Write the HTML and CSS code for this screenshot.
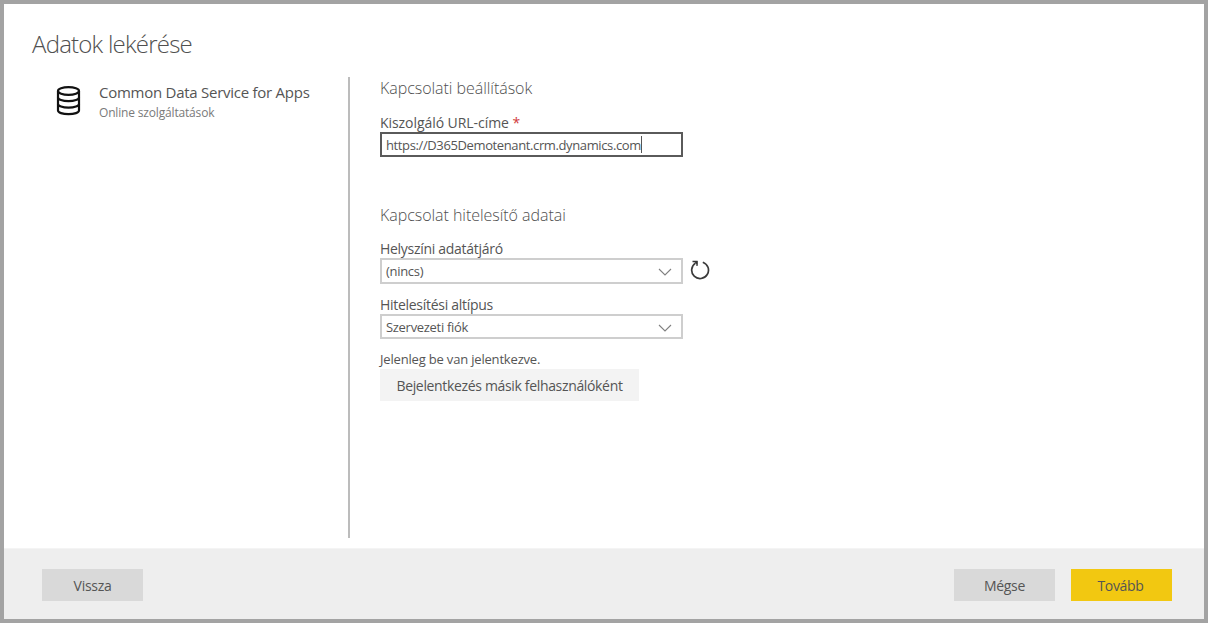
FILE: index.html
```
<!DOCTYPE html>
<html lang="hu">
<head>
<meta charset="utf-8">
<title>Adatok lekérése</title>
<link rel="stylesheet" href="styles.css">
</head>
<body>
<div class="dialog">
  <main class="content">
    <h1 class="title"><span>Adatok lekérése</span></h1>
    <div class="columns">
      <aside class="source">
        <svg class="source-icon" width="25" height="30" viewBox="-0.5 0 25 30" fill="none" stroke="#111" stroke-width="2.2">
          <ellipse cx="12" cy="5" rx="10.5" ry="3.800"/>
          <path d="M1.500 5V24.500C1.500 26.500 6 28.200 12 28.200S22.500 26.500 22.500 24.500V5"/>
          <path d="M1.500 11.400C1.500 13.500 6 15.200 12 15.200S22.500 13.500 22.500 11.400M1.500 17.900C1.500 20 6 21.700 12 21.700S22.500 20 22.500 17.900"/>
        </svg>
        <div class="source-text">
          <div class="source-name"><span>Common Data Service for Apps</span></div>
          <div class="source-kind"><span>Online szolgáltatások</span></div>
        </div>
      </aside>
      <section class="form">
        <h2 class="heading heading-settings"><span>Kapcsolati beállítások</span></h2>
        <label class="label label-url"><span>Kiszolgáló URL-címe <b class="required">*</b></span></label>
        <div class="field field-focused"><span class="url">https://D365Demotenant.crm.dynamics.com</span><i class="caret"></i></div>
        <h2 class="heading heading-credentials"><span>Kapcsolat hitelesítő adatai</span></h2>
        <label class="label label-gateway"><span>Helyszíni adatátjáró</span></label>
        <div class="gateway-row">
          <div class="field"><span class="none">(nincs)</span>
            <svg class="chevron" width="14" height="8" viewBox="0 0 14 8" fill="none" stroke="#808080" stroke-width="1.1"><path d="M1 1l6 6 6-6"/></svg>
          </div>
          <svg class="refresh" width="20" height="20" viewBox="0 0 20 20" fill="none" stroke="#3a3a3a" stroke-width="1.7"><path d="M12.800 2.200A8.400 8.400 0 1 1 5.500 3.100"/><path d="M2.500 1.500H7V6" stroke-width="1.300"/><path d="M3.500 1h4v4z" fill="#333" stroke="none"/></svg>
        </div>
        <label class="label label-subtype"><span>Hitelesítési altípus</span></label>
        <div class="field field-subtype"><span class="account">Szervezeti fiók</span>
          <svg class="chevron" width="14" height="8" viewBox="0 0 14 8" fill="none" stroke="#808080" stroke-width="1.1"><path d="M1 1l6 6 6-6"/></svg>
        </div>
        <p class="status"><span>Jelenleg be van jelentkezve.</span></p>
        <button class="switch-user"><span>Bejelentkezés másik felhasználóként</span></button>
      </section>
    </div>
  </main>
  <footer class="footer">
    <button class="button"><span>Vissza</span></button>
    <div class="actions">
      <button class="button"><span>Mégse</span></button>
      <button class="button button-primary"><span>Tovább</span></button>
    </div>
  </footer>
</div>
</body>
</html>
```
FILE: styles.css
```
* { box-sizing: border-box; }
body { margin: 0; font-family: "Open Sans", "Noto Sans", sans-serif; color: #555; }
h1, h2, p { margin: 0; }
button { border: 0; padding: 0; font-family: inherit; color: #555; }
.dialog { width: 1208px; height: 623px; border: 4px solid #a3a3a3; background: #fff; display: flex; flex-direction: column; }
.content { flex: 1; }
.title { padding: 24px 0 0 28px; height: 73px; font-size: 24px; line-height: 31px; font-weight: 300; color: #505050; letter-spacing: -0.78px; white-space: nowrap; }
.columns { display: flex; height: 461px; }
.source { width: 346px; display: flex; align-items: flex-start; border-right: 2px solid #bcbcbc; padding: 5px 0 0 52px; }
.source-icon { margin-top: 4px; }
.source-text { padding-left: 18px; white-space: nowrap; }
.source-name { font-size: 15px; line-height: 20px; letter-spacing: -0.26px; color: #555; }
.source-kind { margin-top: 1px; font-size: 12px; line-height: 20px; letter-spacing: -0.17px; color: #7a7a7a; }
.form { padding-left: 30px; width: 362px; white-space: nowrap; }
.heading { font-size: 16px; line-height: 24px; font-weight: 300; letter-spacing: -0.04px; color: #505050; }
.heading-settings { margin-top: -1px; }
.heading-credentials { margin-top: 46px; }
.label { display: block; font-size: 14px; line-height: 18px; letter-spacing: -0.29px; }
.label-url { margin-top: 14px; letter-spacing: -0.06px; }
.label-gateway { margin-top: 13px; }
.label-subtype { margin-top: 12px; }
.required { font-weight: 400; color: #d13b3b; }
.field { width: 303px; height: 26px; flex-shrink: 0; display: flex; align-items: center; border: 2px solid #cecece; padding: 0 9px 0 4px; font-size: 13px; letter-spacing: -0.3px; line-height: 22px; }
.field-focused { border-color: #5a5a5a; height: 25px; }
.field-subtype { height: 25px; }
.url { letter-spacing: -0.38px; }
.caret { width: 1px; height: 17px; background: #555; }
.chevron { margin-left: auto; position: relative; top: 1px; }
.gateway-row { display: flex; align-items: flex-start; gap: 7px; }
.refresh { flex-shrink: 0; margin-top: 2px; }
.status { margin-top: 11px; font-size: 13px; line-height: 18px; letter-spacing: -0.18px; }
.switch-user { display: block; margin-top: 1px; width: 259px; height: 32px; background: #f3f3f3; font-size: 14px; letter-spacing: -0.34px; }
.footer { height: 71px; padding: 20px 32px 0 38px; background: #eee; border-top: 1px solid #f4f4f4; display: flex; align-items: flex-start; justify-content: space-between; }
.actions { display: flex; gap: 16px; }
.button { width: 101px; height: 32px; padding-top: 1px; background: #d9d9d9; font-size: 14px; letter-spacing: -0.3px; }
.button-primary { padding-right: 2px; background: #f2c811; }
```
